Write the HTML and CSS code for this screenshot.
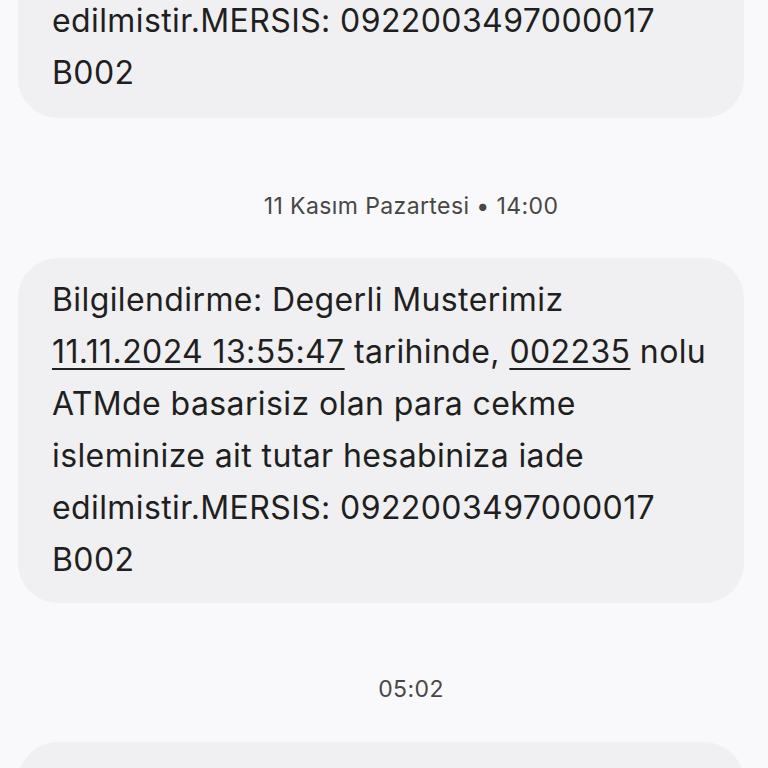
FILE: index.html
```html
<!DOCTYPE html>
<html>
<head>
<meta charset="utf-8">
<link rel="stylesheet" href="styles.css">
</head>
<body>
<div class="thread">
  <div class="bubble first">
    <p>edilmistir.MERSIS: 0922003497000017<br>B002</p>
  </div>
  <div class="stamp date">11 Kasım Pazartesi • 14:00</div>
  <div class="bubble">
    <p>Bilgilendirme: Degerli Musterimiz<br><span class="u">11.11.2024 13:55:47</span> tarihinde, <span class="u">002235</span> nolu<br>ATMde basarisiz olan para cekme<br>isleminize ait tutar hesabiniza iade<br>edilmistir.MERSIS: 0922003497000017<br>B002</p>
  </div>
  <div class="stamp time">05:02</div>
  <div class="bubble last"></div>
</div>
</body>
</html>
```
FILE: styles.css
```css
html, body {
  margin: 0;
  padding: 0;
  background: #f9f9fb;
}
body {
  width: 768px;
  height: 768px;
  overflow: hidden;
  font-family: "Inter", "Roboto", sans-serif;
  color: #1f1f1f;
}
.thread {
  display: flex;
  flex-direction: column;
  padding: 0 24px 0 18px;
}
.bubble {
  background: #f0f0f2;
  border-radius: 40px;
  padding: 16px 34px 17px 34px;
}
.bubble p {
  margin: 0;
  font-size: 32px;
  line-height: 52px;
  letter-spacing: 0.4px;
}
.bubble.first {
  margin-top: -21px;
  border-radius: 0 0 40px 40px;
  padding-bottom: 19px;
}
.bubble.last {
  height: 80px;
  padding: 0;
}
.u {
  text-decoration: underline;
  text-decoration-thickness: 2px;
  text-underline-offset: 5px;
}
.stamp {
  text-align: center;
  font-size: 23px;
  color: #474747;
  padding-left: 60px;
  line-height: 30px;
  letter-spacing: 0.4px;
}
.stamp.date {
  margin: 73px 0 37px;
}
.stamp.time {
  margin: 71px 0 38px;
}
```
